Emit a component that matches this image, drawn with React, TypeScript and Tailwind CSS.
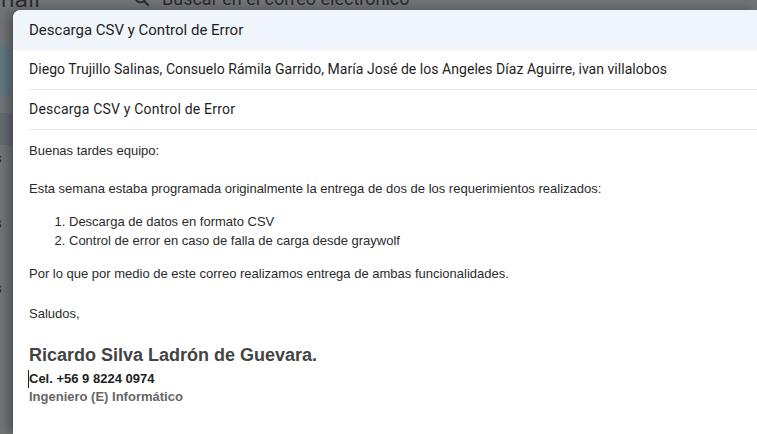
import React from "react";

export default function App() {
  return (
    <div className="relative w-[757px] h-[434px] overflow-hidden bg-[#727477]" style={{ fontFamily: "Roboto, 'Liberation Sans', sans-serif" }}>
      {/* dimmed gmail background */}
      <div className="flex items-start h-[10px] overflow-visible">
        <div className="w-[158px] -ml-[25px] -mt-[14px] shrink-0 text-[24px] text-[#2a2b2d] leading-none" style={{ fontFamily: "'Open Sans', sans-serif" }}>Gmail</div>
        <svg width="18" height="18" viewBox="0 0 24 24" className="-mt-[10px] shrink-0" fill="none" stroke="#2a2b2d" strokeWidth="2.6">
          <circle cx="10" cy="10" r="6.5" />
          <path d="M15 15l6 6" />
        </svg>
        <div className="ml-[11px] -mt-[10px] shrink-0 text-[18px] text-[#2a2b2d] leading-none whitespace-nowrap">Buscar en el correo electrónico</div>
      </div>
      <div className="flex flex-col">
        <div className="mt-[35px] w-[11px] h-[52px] rounded-r-[14px] bg-[#627782]" />
        <div className="mt-[16px] w-[20px] h-[32px] bg-[#666a73]" />
        <div className="mt-[6px] text-[15px] leading-none text-[#222] -ml-[6px]">s</div>
        <div className="mt-[50px] text-[15px] leading-none text-[#222] -ml-[6px]">s</div>
        <div className="mt-[50px] text-[15px] leading-none text-[#222] -ml-[6px]">s</div>
      </div>

      {/* modal */}
      <div className="absolute left-[13px] top-[10px] right-0 bottom-0 bg-white rounded-tl-[8px] shadow-[-4px_0_12px_rgba(0,0,0,0.35)] overflow-hidden">
        <div className="h-[40px] bg-[#f0f4fb] flex items-center pl-[16px] text-[15px] text-[#1f1f1f]">Descarga CSV y Control de Error</div>
        <div className="ml-[16px]">
          <div className="h-[40px] flex items-center border-b border-[#e3e3e3] text-[14px] tracking-[0.04px] text-[#1f1f1f]">Diego Trujillo Salinas, Consuelo Rámila Garrido, María José de los Angeles Díaz Aguirre, ivan villalobos</div>
          <div className="h-[40px] flex items-center border-b border-[#e3e3e3] text-[14px] tracking-[0.2px] text-[#1f1f1f]">Descarga CSV y Control de Error</div>
        </div>
        <div className="pl-[16px] pt-[11px] text-[13px] leading-[19px] text-[#2b2b2b]" style={{ fontFamily: "'Liberation Sans', Arial, sans-serif" }}>
          <div>Buenas tardes equipo:</div>
          <div className="mt-[19px]">Esta semana estaba programada originalmente la entrega de dos de los requerimientos realizados:</div>
          <ol className="list-decimal pl-[40px] mt-[14px]">
            <li>Descarga de datos en formato CSV</li>
            <li>Control de error en caso de falla de carga desde graywolf</li>
          </ol>
          <div className="mt-[14px]">Por lo que por medio de este correo realizamos entrega de ambas funcionalidades.</div>
          <div className="mt-[21px]">Saludos,</div>
          <div className="mt-[19px] text-[18px] leading-[26px] font-bold text-[#444]">Ricardo Silva Ladrón de Guevara.</div>
          <div className="mt-[2px] font-bold text-[#222] leading-[18px] border-l border-[#222] -ml-[1px] inline-block">Cel. +56 9 8224 0974</div>
          <div className="font-bold text-[#666] leading-[18px]">Ingeniero (E) Informático</div>
        </div>
      </div>
    </div>
  );
}
